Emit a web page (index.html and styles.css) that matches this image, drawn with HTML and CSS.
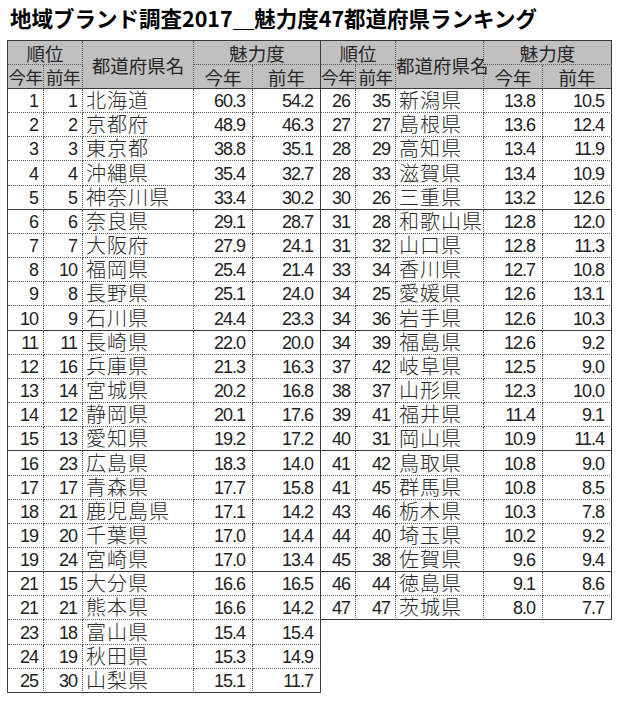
FILE: index.html
```html
<!DOCTYPE html>
<html lang="ja">
<head>
<meta charset="utf-8">
<title>地域ブランド調査2017 魅力度47都道府県ランキング</title>
<link rel="stylesheet" href="styles.css">
</head>
<body>
<h1 class="title">地域ブランド調査2017＿魅力度47都道府県ランキング</h1>
<div class="tables">
  <table class="rank rank-left">
    <colgroup>
      <col class="c-now-l"><col class="c-prev-l"><col class="c-name-l"><col class="c-score"><col class="c-score-prev-l">
    </colgroup>
    <thead>
      <tr class="h1row"><th colspan="2" class="dot-b">順位</th><th rowspan="2" class="h-name">都道府県名</th><th colspan="2" class="dot-b last">魅力度</th></tr>
      <tr class="h2row"><th class="h-sub">今年</th><th class="h-sub">前年</th><th>今年</th><th class="last">前年</th></tr>
    </thead>
    <tbody>
      <tr><td class="num">1</td><td class="num">1</td><td class="name">北海道</td><td class="num val">60.3</td><td class="num val last">54.2</td></tr>
      <tr><td class="num">2</td><td class="num">2</td><td class="name">京都府</td><td class="num val">48.9</td><td class="num val last">46.3</td></tr>
      <tr><td class="num">3</td><td class="num">3</td><td class="name">東京都</td><td class="num val">38.8</td><td class="num val last">35.1</td></tr>
      <tr><td class="num">4</td><td class="num">4</td><td class="name">沖縄県</td><td class="num val">35.4</td><td class="num val last">32.7</td></tr>
      <tr class="sep"><td class="num">5</td><td class="num">5</td><td class="name">神奈川県</td><td class="num val">33.4</td><td class="num val last">30.2</td></tr>
      <tr><td class="num">6</td><td class="num">6</td><td class="name">奈良県</td><td class="num val">29.1</td><td class="num val last">28.7</td></tr>
      <tr><td class="num">7</td><td class="num">7</td><td class="name">大阪府</td><td class="num val">27.9</td><td class="num val last">24.1</td></tr>
      <tr><td class="num">8</td><td class="num">10</td><td class="name">福岡県</td><td class="num val">25.4</td><td class="num val last">21.4</td></tr>
      <tr><td class="num">9</td><td class="num">8</td><td class="name">長野県</td><td class="num val">25.1</td><td class="num val last">24.0</td></tr>
      <tr class="sep"><td class="num">10</td><td class="num">9</td><td class="name">石川県</td><td class="num val">24.4</td><td class="num val last">23.3</td></tr>
      <tr><td class="num">11</td><td class="num">11</td><td class="name">長崎県</td><td class="num val">22.0</td><td class="num val last">20.0</td></tr>
      <tr><td class="num">12</td><td class="num">16</td><td class="name">兵庫県</td><td class="num val">21.3</td><td class="num val last">16.3</td></tr>
      <tr><td class="num">13</td><td class="num">14</td><td class="name">宮城県</td><td class="num val">20.2</td><td class="num val last">16.8</td></tr>
      <tr><td class="num">14</td><td class="num">12</td><td class="name">静岡県</td><td class="num val">20.1</td><td class="num val last">17.6</td></tr>
      <tr class="sep"><td class="num">15</td><td class="num">13</td><td class="name">愛知県</td><td class="num val">19.2</td><td class="num val last">17.2</td></tr>
      <tr><td class="num">16</td><td class="num">23</td><td class="name">広島県</td><td class="num val">18.3</td><td class="num val last">14.0</td></tr>
      <tr><td class="num">17</td><td class="num">17</td><td class="name">青森県</td><td class="num val">17.7</td><td class="num val last">15.8</td></tr>
      <tr><td class="num">18</td><td class="num">21</td><td class="name">鹿児島県</td><td class="num val">17.1</td><td class="num val last">14.2</td></tr>
      <tr><td class="num">19</td><td class="num">20</td><td class="name">千葉県</td><td class="num val">17.0</td><td class="num val last">14.4</td></tr>
      <tr class="sep"><td class="num">19</td><td class="num">24</td><td class="name">宮崎県</td><td class="num val">17.0</td><td class="num val last">13.4</td></tr>
      <tr><td class="num">21</td><td class="num">15</td><td class="name">大分県</td><td class="num val">16.6</td><td class="num val last">16.5</td></tr>
      <tr><td class="num">21</td><td class="num">21</td><td class="name">熊本県</td><td class="num val">16.6</td><td class="num val last">14.2</td></tr>
      <tr><td class="num">23</td><td class="num">18</td><td class="name">富山県</td><td class="num val">15.4</td><td class="num val last">15.4</td></tr>
      <tr><td class="num">24</td><td class="num">19</td><td class="name">秋田県</td><td class="num val">15.3</td><td class="num val last">14.9</td></tr>
      <tr class="sep"><td class="num">25</td><td class="num">30</td><td class="name">山梨県</td><td class="num val">15.1</td><td class="num val last">11.7</td></tr>
    </tbody>
  </table>
  <table class="rank rank-right">
    <colgroup>
      <col class="c-now-r"><col class="c-prev-r"><col class="c-name-r"><col class="c-score"><col class="c-score-prev-r">
    </colgroup>
    <thead>
      <tr class="h1row"><th colspan="2" class="dot-b">順位</th><th rowspan="2" class="h-name">都道府県名</th><th colspan="2" class="dot-b last">魅力度</th></tr>
      <tr class="h2row"><th class="h-sub">今年</th><th class="h-sub">前年</th><th>今年</th><th class="last">前年</th></tr>
    </thead>
    <tbody>
      <tr><td class="num">26</td><td class="num">35</td><td class="name">新潟県</td><td class="num val">13.8</td><td class="num val last">10.5</td></tr>
      <tr><td class="num">27</td><td class="num">27</td><td class="name">島根県</td><td class="num val">13.6</td><td class="num val last">12.4</td></tr>
      <tr><td class="num">28</td><td class="num">29</td><td class="name">高知県</td><td class="num val">13.4</td><td class="num val last">11.9</td></tr>
      <tr><td class="num">28</td><td class="num">33</td><td class="name">滋賀県</td><td class="num val">13.4</td><td class="num val last">10.9</td></tr>
      <tr class="sep"><td class="num">30</td><td class="num">26</td><td class="name">三重県</td><td class="num val">13.2</td><td class="num val last">12.6</td></tr>
      <tr><td class="num">31</td><td class="num">28</td><td class="name">和歌山県</td><td class="num val">12.8</td><td class="num val last">12.0</td></tr>
      <tr><td class="num">31</td><td class="num">32</td><td class="name">山口県</td><td class="num val">12.8</td><td class="num val last">11.3</td></tr>
      <tr><td class="num">33</td><td class="num">34</td><td class="name">香川県</td><td class="num val">12.7</td><td class="num val last">10.8</td></tr>
      <tr><td class="num">34</td><td class="num">25</td><td class="name">愛媛県</td><td class="num val">12.6</td><td class="num val last">13.1</td></tr>
      <tr class="sep"><td class="num">34</td><td class="num">36</td><td class="name">岩手県</td><td class="num val">12.6</td><td class="num val last">10.3</td></tr>
      <tr><td class="num">34</td><td class="num">39</td><td class="name">福島県</td><td class="num val">12.6</td><td class="num val last">9.2</td></tr>
      <tr><td class="num">37</td><td class="num">42</td><td class="name">岐阜県</td><td class="num val">12.5</td><td class="num val last">9.0</td></tr>
      <tr><td class="num">38</td><td class="num">37</td><td class="name">山形県</td><td class="num val">12.3</td><td class="num val last">10.0</td></tr>
      <tr><td class="num">39</td><td class="num">41</td><td class="name">福井県</td><td class="num val">11.4</td><td class="num val last">9.1</td></tr>
      <tr class="sep"><td class="num">40</td><td class="num">31</td><td class="name">岡山県</td><td class="num val">10.9</td><td class="num val last">11.4</td></tr>
      <tr><td class="num">41</td><td class="num">42</td><td class="name">鳥取県</td><td class="num val">10.8</td><td class="num val last">9.0</td></tr>
      <tr><td class="num">41</td><td class="num">45</td><td class="name">群馬県</td><td class="num val">10.8</td><td class="num val last">8.5</td></tr>
      <tr><td class="num">43</td><td class="num">46</td><td class="name">栃木県</td><td class="num val">10.3</td><td class="num val last">7.8</td></tr>
      <tr><td class="num">44</td><td class="num">40</td><td class="name">埼玉県</td><td class="num val">10.2</td><td class="num val last">9.2</td></tr>
      <tr class="sep"><td class="num">45</td><td class="num">38</td><td class="name">佐賀県</td><td class="num val">9.6</td><td class="num val last">9.4</td></tr>
      <tr><td class="num">46</td><td class="num">44</td><td class="name">徳島県</td><td class="num val">9.1</td><td class="num val last">8.6</td></tr>
      <tr class="sep"><td class="num">47</td><td class="num">47</td><td class="name">茨城県</td><td class="num val">8.0</td><td class="num val last">7.7</td></tr>
    </tbody>
  </table>
</div>
</body>
</html>
```

FILE: styles.css
```css
html, body {
  margin: 0;
  padding: 0;
  background: #ffffff;
}

body {
  color: #222222;
  font-family: "Liberation Sans", "Noto Sans CJK JP", sans-serif;
}

.title {
  margin: 0;
  height: 40px;
  padding-left: 10px;
  box-sizing: border-box;
  font-family: "Noto Sans CJK JP", sans-serif;
  font-weight: bold;
  font-size: 21.5px;
  line-height: 35px;
  color: #000000;
  white-space: nowrap;
}

.tables {
  display: flex;
  align-items: flex-start;
  padding-left: 7px;
}

.rank {
  border-collapse: separate;
  border-spacing: 0;
  table-layout: fixed;
  border-top: 1px solid #3a3a3a;
}

.rank-left {
  width: 314px;
  border-left: 1px solid #3a3a3a;
}

.rank-right {
  width: 291px;
}

.c-now-l { width: 36px; }
.c-prev-l { width: 39px; }
.c-name-l { width: 111px; }
.c-score { width: 59px; }
.c-score-prev-l { width: 68px; }
.c-now-r { width: 35px; }
.c-prev-r { width: 40px; }
.c-name-r { width: 88px; }
.c-score-prev-r { width: 69px; }

.rank th,
.rank td {
  padding: 0;
  border-right: 1px dotted #5a5a5a;
  border-bottom: 1px dotted #5a5a5a;
  white-space: nowrap;
  overflow: visible;
}

.rank .last {
  border-right: 1px solid #3a3a3a;
}

.rank th {
  background: #c0c0c0;
  font-family: "Noto Sans CJK JP", sans-serif;
  font-weight: normal;
  font-size: 18.5px;
  line-height: 22px;
  text-align: center;
  vertical-align: middle;
  color: #262626;
}

.h1row,
.h2row {
  height: 24px;
}

.rank .h2row th,
.rank .h-name {
  border-bottom: 1px solid #3a3a3a;
}

.rank .h-sub {
  font-size: 17.5px;
  letter-spacing: -0.5px;
}

.rank tbody tr {
  height: 24.16px;
}

.rank .sep td {
  border-bottom: 1px solid #3a3a3a;
}

.rank td {
  vertical-align: bottom;
  line-height: 22px;
}

.num {
  text-align: right;
  font-size: 18px;
  letter-spacing: -1px;
}

.rank td.num {
  padding-right: 5px;
}

.rank td.val {
  padding-right: 7px;
}

.rank td.name {
  text-align: left;
  padding-left: 3px;
  padding-bottom: 1px;
  font-family: "Noto Sans CJK JP", sans-serif;
  font-weight: 300;
  font-size: 20px;
  letter-spacing: 1px;
  color: #2a2a2a;
}
```
